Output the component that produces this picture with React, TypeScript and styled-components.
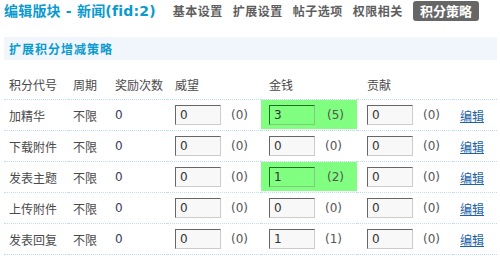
import React from "react";
import styled, { createGlobalStyle } from "styled-components";

const GlobalStyle = createGlobalStyle`
	html, body {
		margin: 0;
		padding: 0;
		background: #fff;
	}
	body {
		font-family: "DejaVu Sans", "Noto Sans CJK SC", sans-serif;
		font-size: 12px;
		color: #333;
	}
`;

type Value = { v: string; max: string; hit?: boolean };
type Rule = { name: string; cycle: string; times: string; ext1: Value; ext2: Value; ext3: Value };

const rules: Rule[] = [
	{ name: "加精华", cycle: "不限", times: "0", ext1: { v: "0", max: "0" }, ext2: { v: "3", max: "5", hit: true }, ext3: { v: "0", max: "0" } },
	{ name: "下载附件", cycle: "不限", times: "0", ext1: { v: "0", max: "0" }, ext2: { v: "0", max: "0" }, ext3: { v: "0", max: "0" } },
	{ name: "发表主题", cycle: "不限", times: "0", ext1: { v: "0", max: "0" }, ext2: { v: "1", max: "2", hit: true }, ext3: { v: "0", max: "0" } },
	{ name: "上传附件", cycle: "不限", times: "0", ext1: { v: "0", max: "0" }, ext2: { v: "0", max: "0" }, ext3: { v: "0", max: "0" } },
	{ name: "发表回复", cycle: "不限", times: "0", ext1: { v: "0", max: "0" }, ext2: { v: "1", max: "1" }, ext3: { v: "0", max: "0" } },
];

const tabs = ["基本设置", "扩展设置", "帖子选项", "权限相关"];

const ValueCell = ({ data, pad }: { data: Value; pad: number }) => (
	<Cell $pad={pad} $hit={data.hit}>
		<NumInput $hit={data.hit} value={data.v} readOnly />
		<Max $gap={data.hit ? 12 : 10}>({data.max})</Max>
	</Cell>
);

export default function App() {
	return (
		<Page>
			<GlobalStyle />
			<TopBar>
				<Title>编辑版块 - 新闻(fid:2)</Title>
				<Tabs>
					{tabs.map((t) => (
						<Tab key={t}>{t}</Tab>
					))}
					<Tab $active>积分策略</Tab>
				</Tabs>
			</TopBar>

			<SectionHead>扩展积分增减策略</SectionHead>

			<Table>
				<Row>
					<Cell $pad={5}>积分代号</Cell>
					<Cell $pad={5}>周期</Cell>
					<Cell $pad={5}>奖励次数</Cell>
					<Cell $pad={8}>威望</Cell>
					<Cell $pad={8}>金钱</Cell>
					<Cell $pad={10}>贡献</Cell>
					<Cell $pad={7} />
				</Row>
				{rules.map((r) => (
					<Row key={r.name}>
						<Cell $pad={5}>{r.name}</Cell>
						<Cell $pad={5}>{r.cycle}</Cell>
						<Cell $pad={5}>
							<Num>{r.times}</Num>
						</Cell>
						<ValueCell data={r.ext1} pad={8} />
						<ValueCell data={r.ext2} pad={8} />
						<ValueCell data={r.ext3} pad={10} />
						<Cell $pad={7}>
							<EditLink href="#">编辑</EditLink>
						</Cell>
					</Row>
				))}
			</Table>
		</Page>
	);
}

const Page = styled.div`
	width: 500px;
	padding: 0 3px 0 4px;
	box-sizing: border-box;
`;

const TopBar = styled.div`
	display: flex;
	align-items: center;
	height: 22px;
	margin-bottom: 15px;
`;

const Title = styled.h1`
	margin: 0;
	font-size: 14px;
	font-weight: bold;
	color: #0a9ad0;
	line-height: 22px;
	letter-spacing: 0.2px;
	white-space: nowrap;
`;

const Tabs = styled.div`
	display: flex;
	align-items: center;
	margin-left: 12px;
`;

const Tab = styled.span<{ $active?: boolean }>`
	font-family: "Noto Sans CJK SC", sans-serif;
	font-weight: bold;
	font-size: ${(p) => (p.$active ? "13px" : "12px")};
	letter-spacing: ${(p) => (p.$active ? "0" : "0.5px")};
	line-height: 20px;
	padding: 0 ${(p) => (p.$active ? "7px" : "5px")};
	margin-left: ${(p) => (p.$active ? "5px" : "0")};
	color: ${(p) => (p.$active ? "#fff" : "#5e5e5e")};
	background: ${(p) => (p.$active ? "#666" : "transparent")};
	border-radius: 3px;
	white-space: nowrap;
`;

const SectionHead = styled.div`
	height: 23px;
	line-height: 23px;
	padding-left: 5px;
	background: #f0f6fc;
	color: #0a9ad0;
	font-family: "Noto Sans CJK SC", sans-serif;
	font-weight: bold;
	font-size: 12px;
	letter-spacing: 1px;
	margin-bottom: 9px;
`;

const Table = styled.div`
	display: flex;
	flex-direction: column;
`;

const Row = styled.div`
	display: grid;
	grid-template-columns: 64px 42px 57px 94px 96px 96px 1fr;
`;

const Cell = styled.div<{ $pad: number; $hit?: boolean }>`
	display: flex;
	align-items: center;
	height: 30px;
	padding-left: ${(p) => p.$pad}px;
	border-bottom: 1px dotted #bcdff4;
	font-family: "Noto Sans CJK SC", sans-serif;
	color: #4a4a4a;
	white-space: nowrap;
	background: ${(p) =>
		p.$hit ? "linear-gradient(#80ff80, #80ff80) top / 100% 29px no-repeat" : "none"};
`;

const Num = styled.span`
	font-family: "DejaVu Sans", sans-serif;
	font-size: 12px;
	color: #3a3a5a;
`;

const NumInput = styled.input<{ $hit?: boolean }>`
	box-sizing: border-box;
	width: 46px;
	height: 20px;
	padding: 0 4px;
	margin: 0;
	font-family: "DejaVu Sans", sans-serif;
	font-size: 12px;
	color: #333;
	outline: none;
	border: 1px solid;
	border-color: ${(p) => (p.$hit ? "#1f6f1f #7ccc7c #7ccc7c #1f6f1f" : "#666 #ccc #ccc #666")};
	background: ${(p) => (p.$hit ? "#80ff80" : "#f8f8f8")};
`;

const Max = styled.span<{ $gap: number }>`
	margin-left: ${(p) => p.$gap}px;
	font-family: "DejaVu Sans", sans-serif;
	font-size: 12px;
	color: #555;
`;

const EditLink = styled.a`
	color: #1d63a6;
	text-decoration: underline;
	font-size: 12px;
`;
